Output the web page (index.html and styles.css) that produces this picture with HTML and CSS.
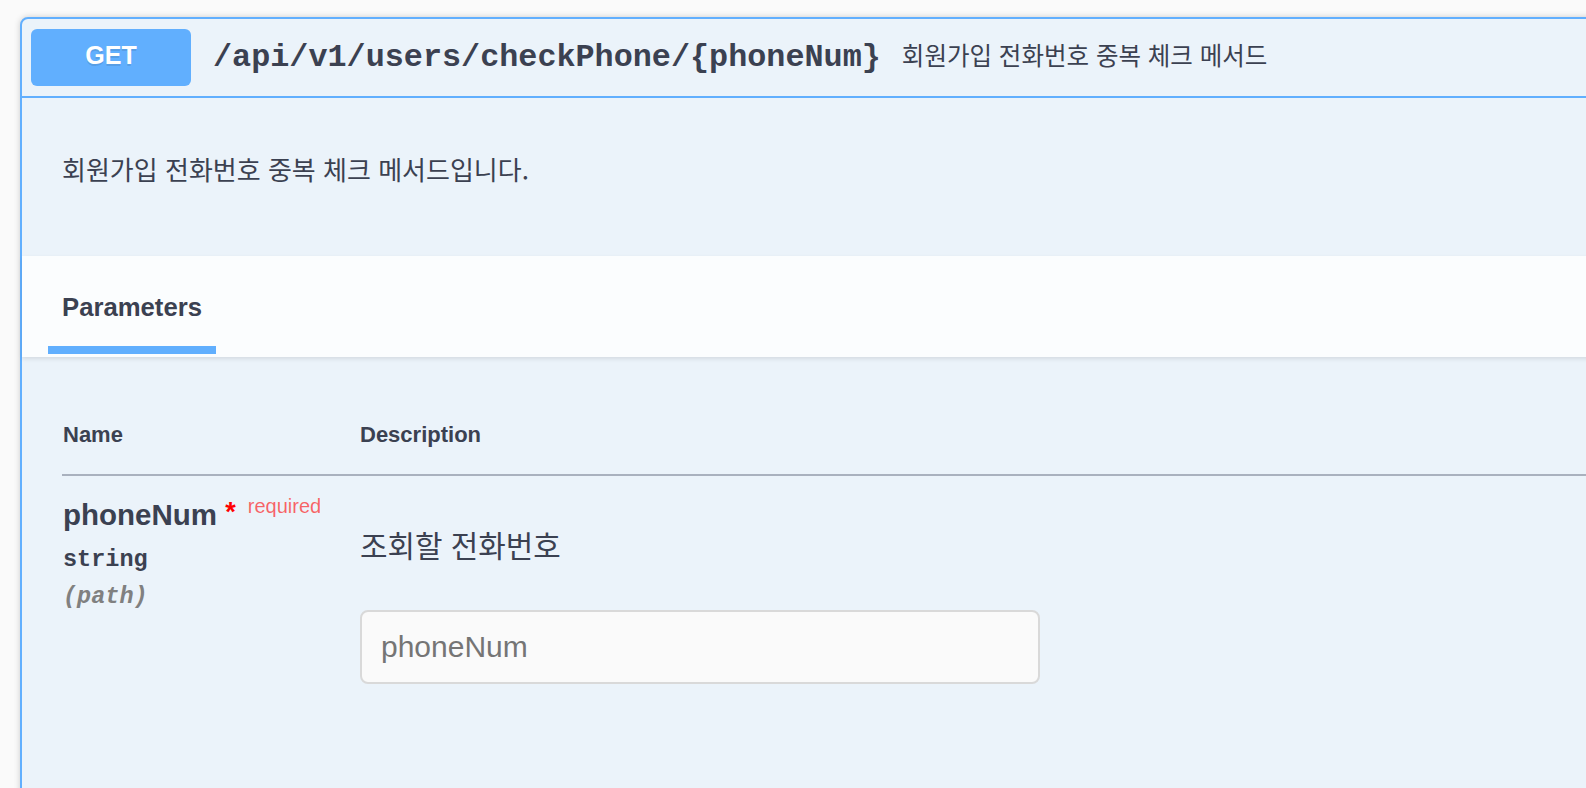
FILE: index.html
```html
<!DOCTYPE html>
<html lang="ko">
<head>
<meta charset="utf-8">
<title>Swagger - checkPhone</title>
<link rel="stylesheet" href="styles.css">
</head>
<body>
<div class="page">
  <div class="opblock">
    <div class="summary">
      <span class="method">GET</span>
      <span class="path">/api/v1/users/checkPhone/{phoneNum}</span>
      <span class="summary-desc">회원가입 전화번호 중복 체크 메서드</span>
    </div>
    <div class="op-body">
      <div class="desc-wrapper">
        <p>회원가입 전화번호 중복 체크 메서드입니다.</p>
      </div>
      <div class="section-header">
        <h4 class="tab">Parameters</h4>
      </div>
      <div class="params">
        <table class="param-table">
          <thead>
            <tr>
              <th class="col-name">Name</th>
              <th class="col-desc">Description</th>
            </tr>
          </thead>
          <tbody>
            <tr>
              <td class="col-name">
                <div class="param-name">phoneNum&nbsp;<span class="star">*</span><span class="req">required</span></div>
                <div class="param-type">string</div>
                <div class="param-in">(path)</div>
              </td>
              <td class="col-desc">
                <p class="param-desc">조회할 전화번호</p>
                <input class="param-input" type="text" placeholder="phoneNum">
              </td>
            </tr>
          </tbody>
        </table>
      </div>
    </div>
  </div>
</div>
</body>
</html>
```
FILE: styles.css
```css
html, body {
  margin: 0;
  padding: 0;
  background: #fafafa;
  overflow: hidden;
  height: 788px;
}

body {
  font-family: "Liberation Sans", Arial, sans-serif;
  color: #3b4151;
}

.page {
  padding: 17px 0 0 20px;
}

.opblock {
  width: 1700px;
  height: 900px;
  border: 2px solid #61affe;
  border-radius: 8px;
  background: #ebf3fa;
  box-shadow: 0 0 6px rgba(0, 0, 0, 0.19);
}

.summary {
  display: flex;
  align-items: center;
  padding: 10px 9px;
  border-bottom: 2px solid #61affe;
}

.method {
  display: flex;
  align-items: center;
  justify-content: center;
  box-sizing: border-box;
  width: 160px;
  height: 57px;
  padding-bottom: 5px;
  border-radius: 6px;
  background: #61affe;
  color: #fff;
  font-family: "Liberation Sans", Arial, sans-serif;
  font-weight: 700;
  font-size: 25px;
  text-shadow: 0 2px 0 rgba(0, 0, 0, 0.1);
}

.path {
  padding: 0 20px 0 22px;
  font-family: "Liberation Mono", "Courier New", monospace;
  font-weight: 700;
  font-size: 31.8px;
  color: #3b4151;
}

.summary-desc {
  margin-bottom: 6px;
  font-family: "Noto Sans CJK KR", sans-serif;
  font-size: 24.5px;
  color: #3b4151;
  padding-left: 1px;
}

.desc-wrapper {
  height: 158px;
  box-sizing: border-box;
  padding: 51px 40px 0 40px;
}

.desc-wrapper p {
  margin: 0;
  font-family: "Noto Sans CJK KR", sans-serif;
  font-size: 26px;
  line-height: 39px;
  color: #3b4151;
}

.section-header {
  height: 101px;
  box-sizing: border-box;
  padding: 38px 40px 0 40px;
  background: rgba(255, 255, 255, 0.8);
  box-shadow: 0 2px 4px rgba(0, 0, 0, 0.1);
}

.tab {
  position: relative;
  display: inline-block;
  margin: 0;
  font-family: "Liberation Sans", Arial, sans-serif;
  font-size: 25.7px;
  line-height: 26px;
  font-weight: 700;
  color: #3b4151;
}

.tab::after {
  content: "";
  position: absolute;
  left: -10%;
  width: 120%;
  top: calc(100% + 26px);
  height: 8px;
  background: #61affe;
}

.params {
  padding: 43px 0 0 40px;
}

.param-table {
  width: 100%;
  border-collapse: collapse;
}

.param-table th {
  text-align: left;
  padding: 24px 0 28px;
  font-size: 22px;
  line-height: 22px;
  font-weight: 700;
  color: #3b4151;
  border-bottom: 2px solid #a9b1be;
}

.param-table th.col-name {
  width: 297px;
  padding-left: 1px;
}

.param-table td {
  vertical-align: top;
  padding: 21px 0 0;
}

.param-table td.col-name {
  padding-left: 1px;
}

.param-name {
  font-family: "Liberation Sans", Arial, sans-serif;
  font-size: 29.5px;
  line-height: 35.4px;
  font-weight: 700;
  color: #3b4151;
  white-space: nowrap;
}

.star {
  position: relative;
  top: -4px;
  color: #ff0000;
  font-size: 27px;
}

.req {
  position: relative;
  top: -12px;
  padding-left: 12px;
  font-size: 20px;
  font-weight: 400;
  color: rgba(255, 0, 0, 0.6);
}

.param-type {
  padding-top: 10px;
  font-family: "Liberation Mono", "Courier New", monospace;
  font-weight: 700;
  font-size: 23.5px;
  line-height: 28px;
  color: #3b4151;
}

.param-in {
  padding-top: 9px;
  font-family: "Liberation Mono", "Courier New", monospace;
  font-weight: 700;
  font-style: italic;
  font-size: 23.5px;
  line-height: 28px;
  color: #808080;
}

.param-desc {
  margin: 25px 0 0;
  font-family: "Noto Sans CJK KR", sans-serif;
  font-size: 29.9px;
  line-height: 45px;
  color: #3b4151;
}

.param-input {
  display: block;
  box-sizing: border-box;
  margin: 43px 0 0;
  width: 680px;
  height: 74px;
  padding: 0 19px;
  border: 2px solid #d9d9d9;
  border-radius: 8px;
  background: #fafafa;
  font-family: "Liberation Sans", Arial, sans-serif;
  font-size: 30px;
  color: #3b4151;
  outline: none;
}

.param-input::placeholder {
  color: #757575;
}
```
